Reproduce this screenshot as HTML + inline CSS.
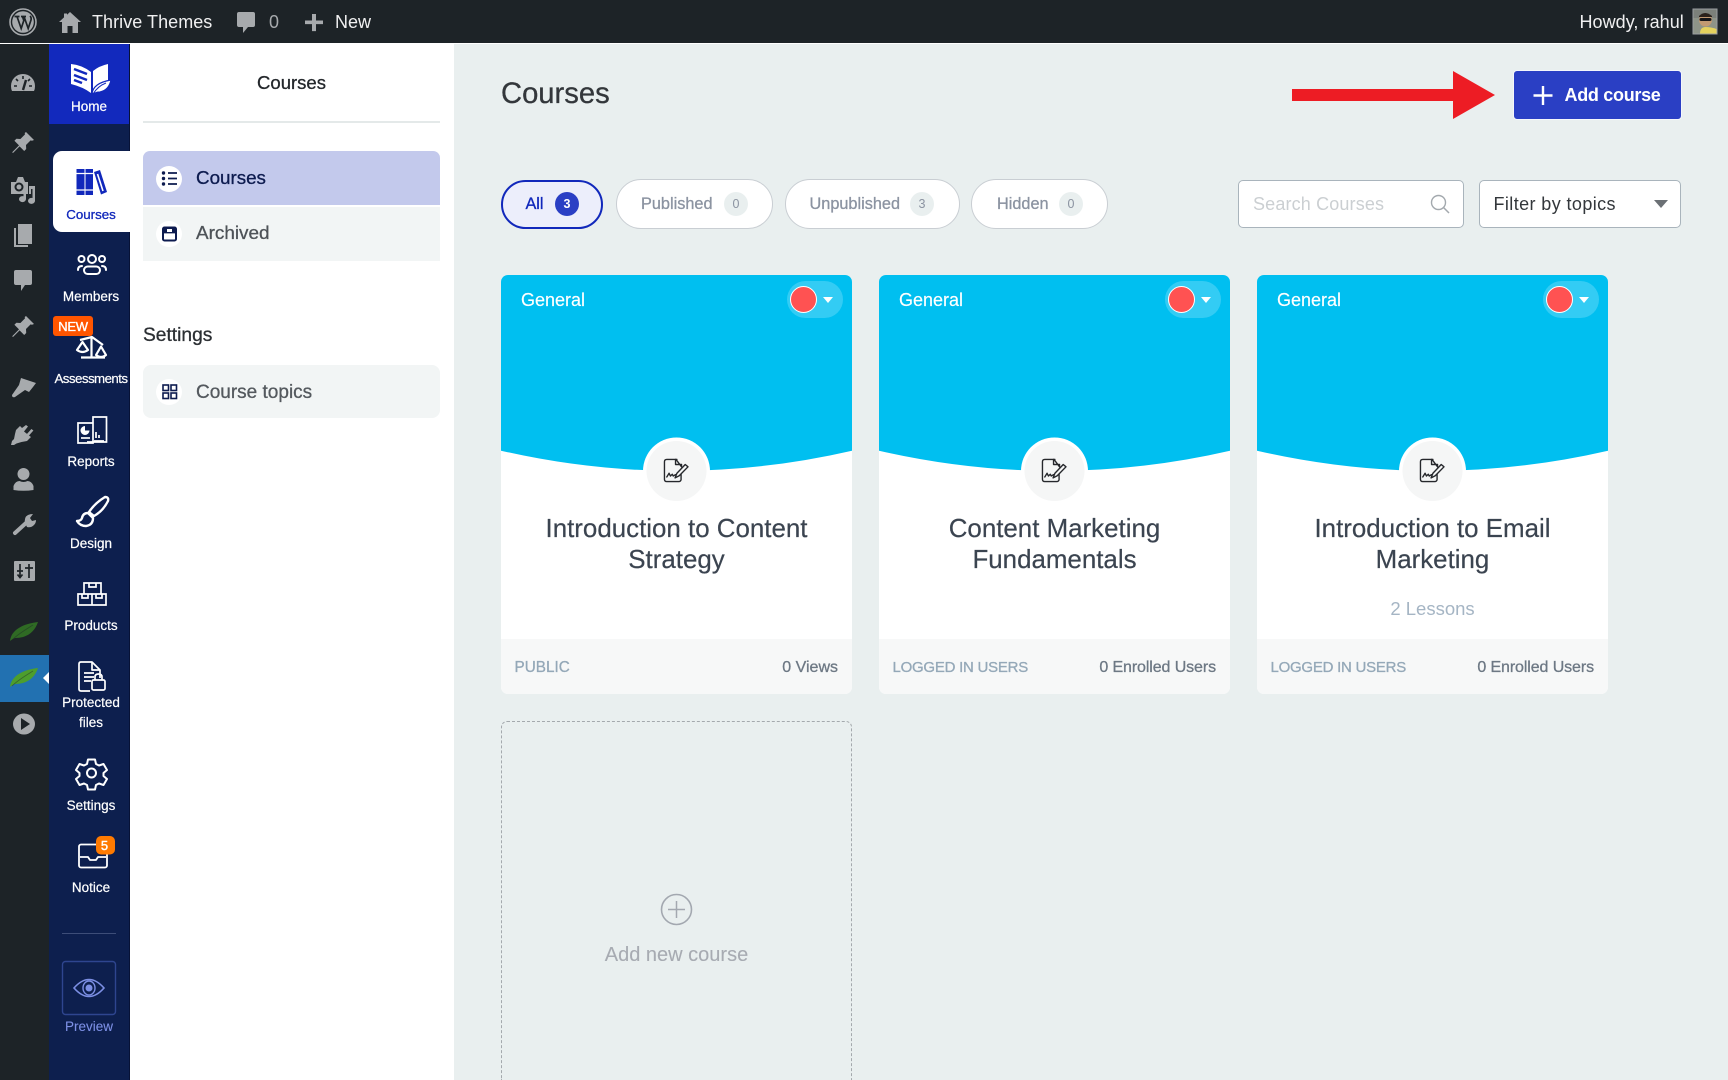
<!DOCTYPE html>
<html lang="en"><head><meta charset="utf-8"><title>Courses</title>
<style>
*{box-sizing:border-box}
html,body{margin:0;padding:0;width:1728px;height:1080px;overflow:hidden;background:#e9efef;font-family:"Liberation Sans",sans-serif}
#w{position:relative;width:1728px;height:1080px;overflow:hidden;background:#e9efef;filter:blur(.3px)}
.a,.t,.c,.r{position:absolute}
.t,.c,.r{white-space:nowrap;line-height:1}
.c{transform:translateX(-50%)}
.r{transform:translateX(-100%)}
.m{-webkit-text-stroke:.3px}
.n{color:#fff;font-size:13.5px;-webkit-text-stroke:.2px}
svg{position:absolute;overflow:visible}
.card{position:absolute;top:275px;width:351px;height:419px;background:#fff;border-radius:7px;overflow:hidden}
.foot{position:absolute;left:0;right:0;top:364px;height:55px;background:#f7f8f8}
.pill{position:absolute;top:179px;height:50px;border:1.5px solid #c9ced3;border-radius:25px;background:#fff}
.bd{position:absolute;top:192px;width:24px;height:24px;border-radius:12px;background:#e9efef;color:#8b93a1;font-size:12.500px;line-height:24px;text-align:center}
.ptx{color:#8b93a1;font-size:16.300px;-webkit-text-stroke:.3px;top:196px}
.ti{left:175.500px;top:238.800px;font-size:25.900px;line-height:31px;color:#3b4450;text-align:center;-webkit-text-stroke:.2px}
.lg{left:13.500px;top:385px;font-size:15px;letter-spacing:-.25px;color:#94a8b8}
.vw{left:337px;top:385px;font-size:16px;letter-spacing:-.1px;color:#6d7884}
</style></head><body>
<div id="w">
<svg width="0" height="0" style="position:absolute"><defs>
<symbol id="pin" viewBox="0 0 24 24" overflow="visible"><path fill="#a7aaad" d="M15 1l8 8-2 .7-1.400-.3-4.600 4.600.2 4-2 2-4.600-4.600L2 22l-.8-.8L8 14.400 3.400 9.800l2-2 4 .2L14 3.400l-.3-1.400z"/></symbol>
<symbol id="leaf" viewBox="0 0 28 20" overflow="visible"><path d="M0 19C1 9 11 2 28 0 25 9 18 16 5 16 3 17 1 18 0 19Z" fill="currentColor"/><path d="M2 18C8 12 15 8 23 3" stroke="#1d2327" stroke-opacity=".45" stroke-width=".8" fill="none"/></symbol>
<symbol id="doc" viewBox="0 0 28 26" overflow="visible"><g fill="none" stroke="#26282c" stroke-width="1.500" stroke-linejoin="round" stroke-linecap="round"><path d="M15 1H4Q1.500 1 1.500 3.500V22.500Q1.500 25 4 25H17Q19 25 19.500 23V17"/><path d="M13.500 1V6.500H20V9L14 1"/><path d="M4 20l2.500-4 1.500 3 2-2 1 2 2.500-1.500"/><path d="M13 21l2-5L24 6.500l3 2.500-9.500 9.700z"/></g></symbol>
</defs></svg>

<!-- Admin bar -->
<header class="a" style="left:0;top:0;width:1728px;height:43px;background:#1d2327"></header>
<div class="a" style="left:0;top:43px;width:1728px;height:1px;background:#fff"></div>
<svg style="left:0;top:0" width="1728" height="44">
 <circle cx="23" cy="22" r="13" fill="none" stroke="#a7aaad" stroke-width="1.600"/>
 <circle cx="23" cy="22" r="10.800" fill="#a7aaad"/>
 <path d="M14.500 16.500h5M17 16.500l4.200 12 2.600-8-1.300-4M21 16.500h5M24 16.500l4.200 12 2.800-8.500q.6-2.500-1-4" fill="none" stroke="#1d2327" stroke-width="1.700"/>
 <path fill="#a7aaad" d="M70 12l11 10h-3v11h-5.500v-7h-5v7H62V22h-3l5-4.600V13.500h3v1.200z"/>
 <path fill="#a7aaad" d="M239 12h14q2 0 2 2v11q0 2-2 2h-5l-5 6v-6h-4q-2 0-2-2V14q0-2 2-2z"/>
 <path fill="#a7aaad" d="M312 14h4v6.500h7v3.600h-7v7h-4v-7h-7v-3.600h7z"/>
 <rect x="1693" y="9" width="24" height="25" fill="#8e9488"/>
 <rect x="1693" y="9" width="24" height="9" fill="#7b807a"/>
 <path d="M1700 34q0-7 5.500-7t11 2v5z" fill="#e4d25e"/>
 <circle cx="1705.500" cy="20" r="6.500" fill="#c29a72"/>
 <path d="M1699 16q6-6 13 0v1h-13z" fill="#2a211b"/>
 <rect x="1699.500" y="18" width="12" height="3" rx="1.500" fill="#14161a"/>
 <rect x="1693" y="9" width="24" height="25" fill="none" stroke="#9a9ea0"/>
</svg>
<span class="t" style="left:92px;top:13px;font-size:18px;letter-spacing:.05px;color:#f0f0f1">Thrive Themes</span>
<span class="t" style="left:269px;top:13px;font-size:18px;color:#a7aaad">0</span>
<span class="t" style="left:335px;top:13px;font-size:18px;color:#f0f0f1">New</span>
<span class="t" style="left:1579.500px;top:13px;font-size:18px;letter-spacing:.05px;color:#f0f0f1">Howdy, rahul</span>

<!-- WP side menu -->
<nav class="a" style="left:0;top:44px;width:49px;height:1036px;background:#1d2327"></nav>
<div class="a" style="left:0;top:655px;width:49px;height:47px;background:#2271b1"></div>
<svg style="left:0;top:0" width="49" height="1080">
 <path fill="#a7aaad" d="M12 91q-1-2-1-5a12 12 0 0 1 24 0q0 3-1 5z"/>
 <path d="M23 76v3M16 79l2 2M30 79l-2 2M14 86h3M32 86h-3" stroke="#1d2327" stroke-width="1.600"/>
 <path d="M26 80l-3 10" stroke="#1d2327" stroke-width="2.400"/>
 <use href="#pin" x="11" y="131" width="24" height="24"/>
 <!-- media -->
 <path fill="#a7aaad" d="M11 182h5l2-5h5l2 5h3v12H11z"/>
 <circle cx="19" cy="187" r="4.500" fill="#1d2327"/><circle cx="19" cy="187" r="2.500" fill="#a7aaad"/>
 <path fill="#a7aaad" d="M29 186h6v15a3.500 3 0 1 1-2.500-3v-9H31v5h-2zM26 193v6a3.500 3 0 1 1-2.500-2.800V193z"/>
 <!-- pages -->
 <path fill="#a7aaad" d="M18 224h14v20H18z"/>
 <path fill="none" stroke="#a7aaad" stroke-width="2" d="M15 228v18h13"/>
 <!-- comments -->
 <path fill="#a7aaad" d="M16 270h14q2 0 2 2v11q0 2-2 2h-5l-4 6v-6h-5q-2 0-2-2v-11q0-2 2-2z"/>
 <use href="#pin" x="11" y="315" width="24" height="24"/>
 <!-- appearance -->
 <path fill="#a7aaad" d="M21 378L36 383 33 387 29 392 25 390 15 397Q12 398 12 395L19 385Z"/>
 <!-- plugin -->
 <path fill="#a7aaad" d="M26 425l2 1.500-4 5 3 2.400 4.400-4.900 2 1.500-4.400 5 2 1.500-4 4-5.500 1-5 1.500-2.500 1.500h-3l1-4 2-2 1-5 1-4 4-4 2 2z"/>
 <!-- user -->
 <circle cx="23.500" cy="474" r="6" fill="#a7aaad"/>
 <path fill="#a7aaad" d="M13.500 490v-4q2-5 6-5 4 2 8 0 4 0 6 5v4q-10 1.500-20 0z"/>
 <!-- wrench -->
 <path fill="none" stroke="#a7aaad" stroke-width="4" stroke-linecap="round" d="M15 533l11-10"/>
 <path fill="#a7aaad" d="M25 523q-1-6 3-8 2-1 5-1l-3 4 2 3 4-1q0 3-2 5-3 3-7 2z"/>
 <!-- sliders -->
 <rect x="14" y="561" width="21" height="20" rx="1" fill="#a7aaad"/>
 <path d="M20 564v13M17.500 574.500l2.500 3 2.500-3M29 578v-14M25 568h8M17 571h6" stroke="#1d2327" stroke-width="1.700" fill="none"/>
 <!-- leaves -->
 <g style="color:#2f6a24"><use href="#leaf" x="10" y="622" width="28" height="20"/></g>
 <g style="color:#4d9e2d"><use href="#leaf" x="10" y="668" width="28" height="20"/></g>
 <path d="M49 672v12l-6-6z" fill="#fff"/>
 <!-- play -->
 <ellipse cx="24" cy="724" rx="11" ry="10.500" fill="#a7aaad"/>
 <path d="M21 718v12l9-6z" fill="#1d2327"/>
</svg>

<!-- Product nav -->
<div class="a" style="left:48.500px;top:44px;width:81px;height:1036px;background:#0d1f4e;border-right:1px solid #071236"></div>
<div class="a" style="left:48.500px;top:44px;width:80.500px;height:80px;background:#1229bd"></div>
<div class="a" style="left:52.500px;top:151px;width:77.500px;height:81px;background:#fff;border-radius:9px 0 0 9px"></div>
<svg style="left:0;top:0" width="130" height="1080">
 <!-- home logo -->
 <path fill="#fff" d="M71 64q11 1 20 8v21q-8-6-20-9z"/>
 <path d="M74 69l13 5M74 75l13 5M74 80l8 3" stroke="#1229bd" stroke-width="2.500" fill="none"/>
 <path fill="#fff" d="M93 71q6-5 15-7v17q-9 0-13 7l-2 2z"/>
 <path fill="#fff" d="M92 94q1-11 19-14-2 10-11 12-3 0-5 1z" stroke="#1229bd" stroke-width="1.200"/>
 <path d="M93 94q5-8 13-11" stroke="#1229bd" stroke-width="1" fill="none"/>
 <!-- courses -->
 <g fill="#1128bb">
  <path d="M76.500 169h8v26h-8zM85.500 169h7.500v26h-7.500z"/>
  <path d="M94 172l6-2 7 22-6 2.500z"/>
 </g>
 <path d="M76.500 173.500h16.500M76.500 190h16.500" stroke="#fff" stroke-width="1.300"/>
 <path d="M97.500 174l5.500 17" stroke="#fff" stroke-width="1.600"/>
 <!-- members -->
 <g fill="none" stroke="#fff" stroke-width="2" stroke-linecap="round">
  <circle cx="81.500" cy="259" r="3"/><circle cx="92" cy="259" r="4"/><circle cx="102" cy="259" r="3"/>
  <rect x="84" y="266.500" width="16" height="7.500" rx="3.700"/>
  <path d="M78 270q0-4 4-4M106 270q0-4-4-4"/>
 </g>
 <!-- assessments -->
 <g fill="none" stroke="#fff" stroke-width="2.200" stroke-linejoin="round">
  <path d="M91.500 337v20M81 357.500h24M80 340l12-3 11 8"/>
  <path d="M77 350l5.500-8 5.500 8q-5.500 4-11 0zM96 355l5-8.500 5 8.500q-5 4-10 0z"/>
 </g>
 <!-- reports -->
 <g fill="none" stroke="#fff" stroke-width="1.700">
  <path d="M93 423V417h13.500v25H87M78 423h15v20H78z"/>
  <path d="M81 438h9"/>
  <path d="M96 432v6M99 435v3M94 441h10" />
 </g>
 <path d="M85 426a4.500 4.500 0 1 0 4.500 4.500h-4.500z" fill="#fff"/>
 <!-- design -->
 <g fill="none" stroke="#fff" stroke-width="2.400" stroke-linejoin="round">
  <path d="M105 497Q109 497 108 501 103 511 94 516L89 512Q95 503 105 497Z"/>
  <path d="M88 513Q83 513 82 518 81 521 77 521 80 526 86 526 93 525 93 518Z"/>
 </g>
 <!-- products -->
 <g fill="none" stroke="#fff" stroke-width="1.700">
  <path d="M84 583h17v11H84zM78 594h14v11H78zM92 594h14v11H92z"/>
  <path d="M89 583v4h7v-4M82 594v4h6v-4M96 594v4h6v-4"/>
 </g>
 <!-- protected -->
 <g fill="none" stroke="#fff" stroke-width="1.700" stroke-linejoin="round">
  <path d="M90 691H81q-2 0-2-2V664q0-2 2-2h11l8 8v8"/>
  <path d="M92 662v8h8M84 673h10M84 677h10M84 681h7"/>
  <rect x="92" y="680" width="13" height="10" rx="1.500"/>
  <path d="M95 680v-3q0-3 3.500-3t3.500 3v3"/>
 </g>
 <!-- settings -->
 <path fill="none" stroke="#fff" stroke-width="2" stroke-linejoin="round" d="M88 759.500h7l1 4.500 3 1.500 4.500-1.500 3.500 6-3.500 3v3l3.500 3-3.500 6-4.500-1.500-3 1.500-1 4.500h-7l-1-4.500-3-1.500-4.500 1.500-3.500-6 3.500-3v-3l-3.500-3 3.500-6 4.500 1.500 3-1.500z"/>
 <circle cx="91.500" cy="773" r="4.500" fill="none" stroke="#fff" stroke-width="2"/>
 <!-- notice -->
 <g fill="none" stroke="#fff" stroke-width="1.800" stroke-linejoin="round">
  <rect x="79" y="844.500" width="28" height="23" rx="2"/>
  <path d="M80 857h8l2 3h6l2-3h8"/>
 </g>
 <rect x="96" y="836" width="19" height="18.500" rx="5" fill="#ff7a00"/>
 <!-- preview -->
 <rect x="62.500" y="961.500" width="53" height="53" rx="3" fill="none" stroke="#2e458f" stroke-width="1.400"/>
 <path d="M74 988q15-17 30 0-15 17-30 0z" fill="none" stroke="#7c8fe4" stroke-width="1.600"/>
 <ellipse cx="89" cy="988" rx="6" ry="7" fill="none" stroke="#7c8fe4" stroke-width="1.400"/>
 <circle cx="89" cy="988" r="3.500" fill="#7c8fe4"/>
 <path d="M62 933.500h54" stroke="#3d4d78" stroke-width="1"/>
</svg>
<span class="c n" style="left:89px;top:100px;font-size:13.5px">Home</span>
<span class="c n" style="left:91px;top:207.500px;color:#1128bb;font-size:13.3px;-webkit-text-stroke:.3px">Courses</span>
<span class="c n" style="left:91px;top:289.500px">Members</span>
<div class="a" style="left:53px;top:316px;width:40px;height:20px;background:#ff5500;border-radius:3px"></div>
<span class="c n" style="left:73px;top:319.500px;font-size:13px;letter-spacing:-.3px;-webkit-text-stroke:.35px">NEW</span>
<span class="c n" style="left:91px;top:372px;font-size:13.300px;letter-spacing:-.55px">Assessments</span>
<span class="c n" style="left:91px;top:454.500px">Reports</span>
<span class="c n" style="left:91px;top:536.500px">Design</span>
<span class="c n" style="left:91px;top:619px">Products</span>
<span class="c n" style="left:91px;top:696px">Protected</span>
<span class="c n" style="left:91px;top:716px">files</span>
<span class="c n" style="left:91px;top:799px">Settings</span>
<span class="c n" style="left:104.500px;top:838.500px;font-size:13px;-webkit-text-stroke:.4px">5</span>
<span class="c n" style="left:91px;top:881px">Notice</span>
<span class="c n" style="left:89px;top:1020px;color:#7c8fe4;-webkit-text-stroke:.1px">Preview</span>

<!-- Sub panel -->
<aside class="a" style="left:130px;top:44px;width:323.500px;height:1036px;background:#fff"></aside>
<span class="c m" style="left:291.500px;top:74px;font-size:18.500px;color:#23272b">Courses</span>
<div class="a" style="left:143px;top:121px;width:297px;height:2px;background:#e4e9e9"></div>
<div class="a" style="left:143px;top:151px;width:297px;height:54px;background:#c3c9ec;border-radius:7px 7px 0 0"></div>
<div class="a" style="left:143px;top:207px;width:297px;height:54px;background:#f2f5f5"></div>
<div class="a" style="left:143px;top:365px;width:297px;height:53px;background:#f2f5f5;border-radius:8px"></div>
<div class="a" style="left:156px;top:165.500px;width:26px;height:26px;background:#fff;border-radius:50%"></div>
<div class="a" style="left:156px;top:221px;width:26px;height:26px;background:#fff;border-radius:50%"></div>
<div class="a" style="left:156px;top:379px;width:26px;height:26px;background:#fff;border-radius:50%"></div>
<svg style="left:0;top:0" width="500" height="420">
 <g fill="#0d1b4f"><circle cx="163.500" cy="173" r="1.700"/><circle cx="163.500" cy="178.500" r="1.700"/><circle cx="163.500" cy="184" r="1.700"/></g>
 <path d="M168 173h9M168 178.500h9M168 184h9" stroke="#0d1b4f" stroke-width="1.800"/>
 <rect x="163" y="227.500" width="13" height="13" rx="1.500" fill="none" stroke="#0d1b4f" stroke-width="2"/>
 <path d="M163 233h13v-5h-13zM169.500 228v5" fill="#0d1b4f" stroke="#0d1b4f" stroke-width=".8"/>
 <path d="M167 229h5v3h-5z" fill="#fff"/>
 <g fill="none" stroke="#0d1b4f" stroke-width="1.600"><rect x="163" y="385" width="5.500" height="5.500"/><rect x="171" y="385" width="5.500" height="5.500"/><rect x="163" y="393" width="5.500" height="5.500"/><rect x="171" y="393" width="5.500" height="5.500"/></g>
</svg>
<span class="t m" style="left:196px;top:169px;font-size:18.800px;color:#0d1b4f">Courses</span>
<span class="t m" style="left:196px;top:225px;font-size:18.900px;color:#4e5358">Archived</span>
<span class="t m" style="left:143px;top:325.500px;font-size:19.200px;color:#2b2f33">Settings</span>
<span class="t m" style="left:196px;top:382.500px;font-size:19px;color:#54595e">Course topics</span>

<!-- Main -->
<span class="t m" style="left:501px;top:80px;font-size:29.200px;color:#33373b">Courses</span>

<svg style="left:1280px;top:60px" width="230" height="70"><path fill="#ed1c24" d="M12 29H173V11L215 35 173 59V41H12z"/></svg>
<div class="a" style="left:1512.500px;top:69.500px;width:169px;height:50px;background:#2a3fc4;border-radius:4px;border:1px solid #f4f6fb"></div>
<svg style="left:1530px;top:82px" width="26" height="26"><path d="M13 4v19M3.500 13.500h19" stroke="#fff" stroke-width="2.400"/></svg>
<span class="t" style="left:1564.500px;top:86px;font-size:18px;font-weight:700;color:#fff;letter-spacing:-.3px">Add course</span>

<div class="a" style="left:501px;top:179.500px;width:102px;height:49px;border:2.500px solid #1128bb;border-radius:25px;background:#eceefb"></div>
<span class="c m" style="left:534.500px;top:196px;font-size:16.300px;color:#1128bb">All</span>
<div class="bd" style="left:555px;background:#2a3fc4;color:#fff;font-weight:700">3</div>
<div class="pill" style="left:616px;width:157px"></div>
<span class="t ptx" style="left:641px">Published</span><div class="bd" style="left:724px">0</div>
<div class="pill" style="left:785px;width:175px"></div>
<span class="t ptx" style="left:809.500px">Unpublished</span><div class="bd" style="left:910px">3</div>
<div class="pill" style="left:971px;width:137px"></div>
<span class="t ptx" style="left:997px">Hidden</span><div class="bd" style="left:1059px">0</div>

<div class="a" style="left:1238px;top:180px;width:226px;height:48px;background:#fff;border:1.500px solid #a9b4bc;border-radius:5px"></div>
<span class="t" style="left:1253px;top:195px;font-size:18px;letter-spacing:.15px;color:#cbcfd2">Search Courses</span>
<svg style="left:1430px;top:194px" width="22" height="22"><circle cx="8.500" cy="8.500" r="7" fill="none" stroke="#a3a9ae" stroke-width="1.400"/><path d="M13.500 13.500l5.500 5.500" stroke="#a3a9ae" stroke-width="1.500"/></svg>
<div class="a" style="left:1478.500px;top:180px;width:202px;height:48px;background:#fff;border:1.500px solid #a9b4bc;border-radius:5px"></div>
<span class="t" style="left:1493.500px;top:195px;font-size:18px;letter-spacing:.4px;color:#33373b">Filter by topics</span>
<svg style="left:1654px;top:200px" width="14" height="9"><path d="M0 0h14L7 8z" fill="#6b7075"/></svg>

<!-- Cards -->
<article class="card" style="left:501px">
 <svg style="left:0;top:0" width="351" height="230"><path d="M0 0H351V175.700Q175.500 216 0 175.700Z" fill="#00bff0"/><circle cx="175.500" cy="196" r="33.500" fill="#fff"/><circle cx="175.500" cy="196" r="30" fill="#f5f6f6"/><use href="#doc" x="162" y="183.500" width="26" height="24"/></svg>
 <span class="t" style="left:20px;top:16px;font-size:18px;color:#fff;-webkit-text-stroke:.15px">General</span>
 <div class="a" style="left:286px;top:6px;width:56px;height:37px;border-radius:19px;background:#33ccf4"></div>
 <div class="a" style="left:289px;top:11px;width:27px;height:27px;border-radius:50%;background:#ff5252;border:1.500px solid #fff"></div>
 <svg style="left:322px;top:22px" width="10" height="6"><path d="M0 0h10L5 6z" fill="#fff"/></svg>
 <div class="c ti">Introduction to Content<br>Strategy</div>
 <div class="foot"></div>
 <span class="t m lg" style="font-size:15.300px;letter-spacing:0">PUBLIC</span>
 <span class="r m vw" style="letter-spacing:0">0 Views</span>
</article>
<article class="card" style="left:879px">
 <svg style="left:0;top:0" width="351" height="230"><path d="M0 0H351V175.700Q175.500 216 0 175.700Z" fill="#00bff0"/><circle cx="175.500" cy="196" r="33.500" fill="#fff"/><circle cx="175.500" cy="196" r="30" fill="#f5f6f6"/><use href="#doc" x="162" y="183.500" width="26" height="24"/></svg>
 <span class="t" style="left:20px;top:16px;font-size:18px;color:#fff;-webkit-text-stroke:.15px">General</span>
 <div class="a" style="left:286px;top:6px;width:56px;height:37px;border-radius:19px;background:#33ccf4"></div>
 <div class="a" style="left:289px;top:11px;width:27px;height:27px;border-radius:50%;background:#ff5252;border:1.500px solid #fff"></div>
 <svg style="left:322px;top:22px" width="10" height="6"><path d="M0 0h10L5 6z" fill="#fff"/></svg>
 <div class="c ti">Content Marketing<br>Fundamentals</div>
 <div class="foot"></div>
 <span class="t m lg">LOGGED IN USERS</span>
 <span class="r m vw">0 Enrolled Users</span>
</article>
<article class="card" style="left:1257px">
 <svg style="left:0;top:0" width="351" height="230"><path d="M0 0H351V175.700Q175.500 216 0 175.700Z" fill="#00bff0"/><circle cx="175.500" cy="196" r="33.500" fill="#fff"/><circle cx="175.500" cy="196" r="30" fill="#f5f6f6"/><use href="#doc" x="162" y="183.500" width="26" height="24"/></svg>
 <span class="t" style="left:20px;top:16px;font-size:18px;color:#fff;-webkit-text-stroke:.15px">General</span>
 <div class="a" style="left:286px;top:6px;width:56px;height:37px;border-radius:19px;background:#33ccf4"></div>
 <div class="a" style="left:289px;top:11px;width:27px;height:27px;border-radius:50%;background:#ff5252;border:1.500px solid #fff"></div>
 <svg style="left:322px;top:22px" width="10" height="6"><path d="M0 0h10L5 6z" fill="#fff"/></svg>
 <div class="c ti">Introduction to Email<br>Marketing</div>
 <span class="c" style="left:175.500px;top:325px;font-size:18.500px;color:#a5b5c4">2 Lessons</span>
 <div class="foot"></div>
 <span class="t m lg">LOGGED IN USERS</span>
 <span class="r m vw">0 Enrolled Users</span>
</article>

<div class="a" style="left:501px;top:721px;width:351px;height:359px;border:1px dashed #a4a9ad;border-bottom:0;border-radius:6px 6px 0 0"></div>
<svg style="left:658px;top:891px" width="38" height="38"><circle cx="18.500" cy="18.500" r="15" fill="none" stroke="#a3a8b0" stroke-width="1.600"/><path d="M18.500 10v17M10 18.500h17" stroke="#a3a8b0" stroke-width="1.500"/></svg>
<span class="c" style="left:676.500px;top:944.500px;font-size:20px;color:#a7abb2;-webkit-text-stroke:.1px">Add new course</span>
</div>
</body></html>
